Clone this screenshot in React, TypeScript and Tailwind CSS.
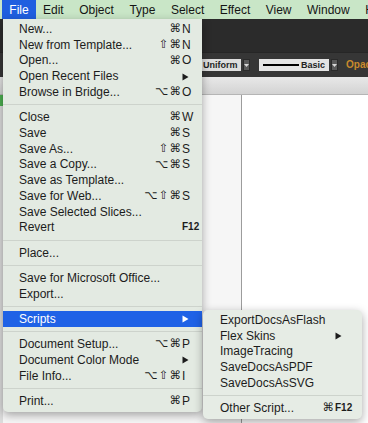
import React from 'react';

type MenuItem =
  | { sep: true }
  | {
      sep?: false;
      label: string;
      mods?: string;
      keyChar?: string;
      small?: boolean;
      arrow?: boolean;
      active?: boolean;
    };

const MENUBAR = ['Edit', 'Object', 'Type', 'Select', 'Effect', 'View', 'Window', 'Help'];

const FILE_MENU: MenuItem[] = [
  { label: 'New...', mods: '⌘', keyChar: 'N' },
  { label: 'New from Template...', mods: '⇧⌘', keyChar: 'N' },
  { label: 'Open...', mods: '⌘', keyChar: 'O' },
  { label: 'Open Recent Files', arrow: true },
  { label: 'Browse in Bridge...', mods: '⌥⌘', keyChar: 'O' },
  { sep: true },
  { label: 'Close', mods: '⌘', keyChar: 'W' },
  { label: 'Save', mods: '⌘', keyChar: 'S' },
  { label: 'Save As...', mods: '⇧⌘', keyChar: 'S' },
  { label: 'Save a Copy...', mods: '⌥⌘', keyChar: 'S' },
  { label: 'Save as Template...' },
  { label: 'Save for Web...', mods: '⌥⇧⌘', keyChar: 'S' },
  { label: 'Save Selected Slices...' },
  { label: 'Revert', keyChar: 'F12', small: true },
  { sep: true },
  { label: 'Place...' },
  { sep: true },
  { label: 'Save for Microsoft Office...' },
  { label: 'Export...' },
  { sep: true },
  { label: 'Scripts', arrow: true, active: true },
  { sep: true },
  { label: 'Document Setup...', mods: '⌥⌘', keyChar: 'P' },
  { label: 'Document Color Mode', arrow: true },
  { label: 'File Info...', mods: '⌥⇧⌘', keyChar: 'I' },
  { sep: true },
  { label: 'Print...', mods: '⌘', keyChar: 'P' },
];

const SCRIPTS_MENU: MenuItem[] = [
  { label: 'ExportDocsAsFlash' },
  { label: 'Flex Skins', arrow: true },
  { label: 'ImageTracing' },
  { label: 'SaveDocsAsPDF' },
  { label: 'SaveDocsAsSVG' },
  { sep: true },
  { label: 'Other Script...', mods: '⌘', keyChar: 'F12', small: true },
];

function Arrow({ white }: { white?: boolean }) {
  return (
    <svg width="7" height="8" viewBox="0 0 7 8" className="mt-[1px]">
      <path d="M0.5 0.5 L6.5 4 L0.5 7.5 Z" fill={white ? '#ffffff' : '#1c1c1c'} />
    </svg>
  );
}

function Menu({ items, rowClass }: { items: MenuItem[]; rowClass: string }) {
  return (
    <>
      {items.map((item, i) => {
        if (item.sep) {
          return (
            <div key={i} className="h-[9.5px] flex items-center">
              <div className="h-px w-full bg-[#cdd3cc]" />
            </div>
          );
        }
        return (
          <div
            key={i}
            className={`flex items-center h-[15.75px] ${rowClass} ${
              item.active ? 'bg-[#1f62e6] text-white' : 'text-[#1c1c1c]'
            }`}
          >
            <span className="flex-1 whitespace-nowrap">{item.label}</span>
            {item.mods && (
              <span className="font-['DejaVu_Sans',sans-serif] text-[11.5px] tracking-[1px]">
                {item.mods}
              </span>
            )}
            <span className="w-[18px] shrink-0 flex items-center">
              {item.arrow ? (
                <Arrow white={item.active} />
              ) : item.small ? (
                <span className="text-[10px] font-bold">{item.keyChar}</span>
              ) : (
                item.keyChar
              )}
            </span>
          </div>
        );
      })}
    </>
  );
}

function Dropdown() {
  return (
    <div className="w-[10px] h-[12px] bg-[#5a5a5a] border border-[#2a2a2a] flex items-center justify-center">
      <svg width="5" height="3" viewBox="0 0 5 3">
        <path d="M0 0 H5 L2.5 3 Z" fill="#d8d8d8" />
      </svg>
    </div>
  );
}

export default function App() {
  return (
    <div className="relative w-[368px] h-[423px] overflow-hidden flex flex-col bg-white font-['Liberation_Sans',Arial,sans-serif] text-[12px] leading-none">
      {/* Menu bar */}
      <div className="h-[19px] shrink-0 bg-[#c9e6c7] flex items-center text-[#151515] whitespace-nowrap">
        <div className="ml-[2px] h-full w-[34px] shrink-0 bg-[#1f5fe0] text-white flex items-center justify-center">
          File
        </div>
        <div className="flex items-center gap-[15.5px] ml-[7px] shrink-0">
          {MENUBAR.map((m) => (
            <span key={m}>{m}</span>
          ))}
        </div>
      </div>

      {/* App chrome behind the menu */}
      <div className="h-[33px] shrink-0 bg-[#2b2b2b]" />
      <div className="h-[25px] shrink-0 bg-[#363636] border-t border-[#262626] flex items-center pl-[197px] gap-[2px] whitespace-nowrap">
        <div className="h-[12px] w-[44px] shrink-0 bg-[#dedede] flex items-center pl-[6px] text-[9px] font-bold text-[#1e1e1e]">
          Uniform
        </div>
        <Dropdown />
        <div className="ml-[7px] h-[12px] w-[70px] shrink-0 bg-[#e4e4e4] flex items-center px-[4px] gap-[2px]">
          <div className="h-[2px] w-[38px] bg-black" />
          <span className="text-[9px] font-bold text-[#222]">Basic</span>
        </div>
        <Dropdown />
        <span className="ml-[6px] text-[10px] font-bold text-[#c98a2c]">Opacity</span>
      </div>
      <div className="h-[18px] shrink-0 bg-gradient-to-b from-[#e8e8e8] to-[#d3d3d3] border-b border-[#b5b5b5]" />
      <div className="flex-1 flex">
        <div className="w-[3px] flex flex-col">
          <div className="h-[11px] bg-[#4caf50]" />
          <div className="flex-1 bg-[#dcdcdc]" />
        </div>
        <div className="w-[239px] bg-[#f6f6f6] border-r border-[#9c9c9c]" />
        <div className="flex-1 bg-white" />
      </div>

      {/* File menu */}
      <div className="absolute left-[3px] top-[19px] w-[199px] pt-[2px] pb-[3px] bg-[#e3eae2] rounded-b-[5px] shadow-[0_3px_10px_rgba(0,0,0,0.35)]">
        <Menu items={FILE_MENU} rowClass="pl-[16px] pr-[2px]" />
      </div>

      {/* Scripts submenu */}
      <div className="absolute left-[203px] top-[310px] w-[159px] pt-[2px] pb-[3px] bg-[#e6ece5] rounded-[5px] shadow-[0_3px_10px_rgba(0,0,0,0.35)]">
        <Menu items={SCRIPTS_MENU} rowClass="pl-[17px] pr-[9px]" />
      </div>
    </div>
  );
}
